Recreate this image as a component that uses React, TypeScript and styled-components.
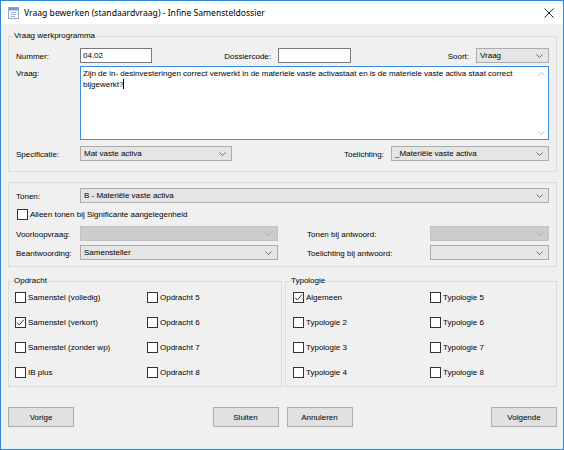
import styled, { createGlobalStyle } from 'styled-components';

const GlobalStyle = createGlobalStyle`
  html, body {
    margin: 0;
    padding: 0;
    background: #ffffff;
  }
  * {
    box-sizing: border-box;
  }
`;

const Window = styled.div`
  width: 564px;
  height: 450px;
  border: 1px solid #2b86d6;
  background: #f0f0f0;
  font-family: 'Liberation Sans', Arial, sans-serif;
  font-size: 8px;
  color: #000;
  display: flex;
  flex-direction: column;
`;

const TitleBar = styled.div`
  height: 23px;
  background: #ffffff;
  display: flex;
  align-items: center;
  padding: 0 9px 0 7px;
  flex-shrink: 0;
`;

const TitleText = styled.div`
  font-family: 'Noto Sans', 'Open Sans', sans-serif;
  font-size: 8.6px;
  margin-left: 5px;
  flex: 1;
  color: #000;
`;

const Content = styled.div`
  flex: 1;
  padding: 7px 6px 0 7px;
  display: flex;
  flex-direction: column;
`;

const Group = styled.fieldset<{ $mt?: number }>`
  margin: ${p => p.$mt ?? 0}px 0 0 0;
  padding: 0;
  border: 1px solid #dcdcdc;
  min-width: 0;
`;

const Legend = styled.legend`
  margin-left: 4px;
  padding: 0 1px;
  font-size: 8px;
  line-height: 10px;
  height: 10px;
`;

const GroupBody = styled.div<{ $pt: number; $pb: number }>`
  padding: ${p => p.$pt}px 7px ${p => p.$pb}px 7px;
  display: flex;
  flex-direction: column;
`;

const Row = styled.div<{ $mt?: number }>`
  display: flex;
  align-items: center;
  height: 15px;
  margin-top: ${p => p.$mt ?? 0}px;
`;

const Label = styled.div<{ $w?: number; $right?: boolean; $grow?: boolean }>`
  width: ${p => (p.$w ? `${p.$w}px` : 'auto')};
  flex: ${p => (p.$grow ? 1 : 'none')};
  text-align: ${p => (p.$right ? 'right' : 'left')};
  padding-right: ${p => (p.$right ? 7 : 0)}px;
  white-space: nowrap;
  padding-top: 2px;
`;

const TextInput = styled.div<{ $w: number }>`
  width: ${p => p.$w}px;
  height: 15px;
  background: #fff;
  border: 1px solid #7a7a7a;
  padding: 1px 2px;
  line-height: 12px;
`;

const SelectBox = styled.div<{ $w?: number; $disabled?: boolean }>`
  width: ${p => (p.$w ? `${p.$w}px` : 'auto')};
  flex: ${p => (p.$w ? 'none' : 1)};
  height: 15px;
  background: ${p => (p.$disabled ? '#cccccc' : '#e5e5e5')};
  border: 1px solid ${p => (p.$disabled ? '#c4c4c4' : '#acacac')};
  display: flex;
  align-items: center;
  padding: 0 5px 0 3px;
`;

const SelectText = styled.div`
  flex: 1;
  white-space: nowrap;
  overflow: hidden;
`;

const Chevron = ({ color = '#606060' }: { color?: string }) => (
  <svg width="7" height="4" viewBox="0 0 7 4">
    <polyline points="0.5,0.5 3.5,3.5 6.5,0.5" fill="none" stroke={color} strokeWidth="0.9" />
  </svg>
);

const Select = ({ w, text, disabled }: { w?: number; text?: string; disabled?: boolean }) => (
  <SelectBox $w={w} $disabled={disabled}>
    <SelectText>{text}</SelectText>
    <Chevron color={disabled ? '#a8a8a8' : '#606060'} />
  </SelectBox>
);

const QuestionRow = styled.div`
  display: flex;
  margin-top: 3px;
  height: 74px;
`;

const QuestionLabel = styled.div`
  width: 64px;
  padding-top: 3px;
`;

const QuestionBox = styled.div`
  flex: 1;
  display: flex;
  background: #fff;
  border: 1px solid #3c8fe0;
`;

const QuestionText = styled.div`
  flex: 1;
  padding: 2px 2px;
  line-height: 10px;
`;

const Caret = styled.span`
  display: inline-block;
  width: 1px;
  height: 10px;
  background: #000;
  vertical-align: -2px;
`;

const ScrollBar = styled.div`
  width: 13px;
  display: flex;
  flex-direction: column;
  justify-content: space-between;
  align-items: center;
  padding: 5px 0 4px;
`;

const ScrollArrow = ({ up }: { up?: boolean }) => (
  <svg width="7" height="4" viewBox="0 0 7 4">
    <polyline
      points={up ? '0.5,3.5 3.5,0.5 6.5,3.5' : '0.5,0.5 3.5,3.5 6.5,0.5'}
      fill="none"
      stroke="#b4b4b4"
      strokeWidth="0.9"
    />
  </svg>
);

const Spacer = styled.div<{ $w: number }>`
  width: ${p => p.$w}px;
  flex: none;
`;

const CheckRow = styled.div<{ $ml?: number }>`
  display: flex;
  align-items: center;
  height: 15px;
  margin-left: ${p => p.$ml ?? 0}px;
  white-space: nowrap;
`;

const Box = styled.div`
  width: 11px;
  height: 11px;
  border: 1px solid #333;
  background: #fff;
  margin-right: 2px;
  display: flex;
  align-items: center;
  justify-content: center;
  flex: none;
`;

const CheckBox = ({ label, checked, ml }: { label: string; checked?: boolean; ml?: number }) => (
  <CheckRow $ml={ml}>
    <Box>
      {checked && (
        <svg width="9" height="9" viewBox="0 0 9 9">
          <polyline points="1,4.5 3.3,7 8,1.5" fill="none" stroke="#222" strokeWidth="0.9" />
        </svg>
      )}
    </Box>
    {label}
  </CheckRow>
);

const BottomGroups = styled.div`
  display: flex;
  gap: 3px;
  margin-top: 9px;
`;

const CheckGroup = styled(Group)<{ $w: number }>`
  width: ${p => p.$w}px;
  flex: none;
`;

const CheckGrid = styled.div<{ $col: number; $pl: number }>`
  display: grid;
  grid-template-columns: ${p => p.$col}px 1fr;
  row-gap: 10px;
  padding: 4px 0 6px ${p => p.$pl}px;
`;

const ButtonBar = styled.div`
  display: flex;
  justify-content: space-between;
  margin-top: 20px;
`;

const ButtonPair = styled.div`
  display: flex;
  gap: 8px;
`;

const Button = styled.div`
  width: 66px;
  height: 20px;
  background: #e1e1e1;
  border: 1px solid #adadad;
  display: flex;
  align-items: center;
  justify-content: center;
`;

const DocIcon = () => (
  <svg width="11" height="12" viewBox="0 0 11 12">
    <rect x="0.5" y="0.5" width="10" height="11" fill="#fff" stroke="#8aa6c8" />
    <rect x="1" y="1" width="9" height="2.5" fill="#6f9bd1" />
    <line x1="2.5" y1="5.5" x2="8.5" y2="5.5" stroke="#a0b4cc" />
    <line x1="2.5" y1="7.5" x2="8.5" y2="7.5" stroke="#a0b4cc" />
    <line x1="2.5" y1="9.5" x2="7" y2="9.5" stroke="#a0b4cc" />
  </svg>
);

const CloseIcon = () => (
  <svg width="10" height="10" viewBox="0 0 10 10">
    <line x1="0.5" y1="0.5" x2="9.5" y2="9.5" stroke="#111" strokeWidth="0.9" />
    <line x1="9.5" y1="0.5" x2="0.5" y2="9.5" stroke="#111" strokeWidth="0.9" />
  </svg>
);

const opdracht = [
  ['Samenstel (volledig)', false],
  ['Opdracht 5', false],
  ['Samenstel (verkort)', true],
  ['Opdracht 6', false],
  ['Samenstel (zonder wp)', false],
  ['Opdracht 7', false],
  ['IB plus', false],
  ['Opdracht 8', false],
] as const;

const typologie = [
  ['Algemeen', true],
  ['Typologie 5', false],
  ['Typologie 2', false],
  ['Typologie 6', false],
  ['Typologie 3', false],
  ['Typologie 7', false],
  ['Typologie 4', false],
  ['Typologie 8', false],
] as const;

export default function App() {
  return (
    <>
      <GlobalStyle />
      <Window>
        <TitleBar>
          <DocIcon />
          <TitleText>Vraag bewerken (standaardvraag) - Infine Samensteldossier</TitleText>
          <CloseIcon />
        </TitleBar>
        <Content>
          <Group>
            <Legend>Vraag werkprogramma</Legend>
            <GroupBody $pt={7} $pb={10}>
              <Row>
                <Label $w={64}>Nummer:</Label>
                <TextInput $w={72}>04.02</TextInput>
                <Label $w={126} $right>
                  Dossiercode:
                </Label>
                <TextInput $w={73} />
                <Label $grow $right>
                  Soort:
                </Label>
                <Select w={73} text="Vraag" />
              </Row>
              <QuestionRow>
                <QuestionLabel>Vraag:</QuestionLabel>
                <QuestionBox>
                  <QuestionText>
                    Zijn de in- desinvesteringen correct verwerkt in de materiele vaste activastaat en is de
                    materiele vaste activa staat correct bijgewerkt?
                    <Caret />
                  </QuestionText>
                  <ScrollBar>
                    <ScrollArrow up />
                    <ScrollArrow />
                  </ScrollBar>
                </QuestionBox>
              </QuestionRow>
              <Row $mt={6}>
                <Label $w={64}>Specificatie:</Label>
                <Select w={152} text="Mat vaste activa" />
                <Label $grow $right>
                  Toelichting:
                </Label>
                <Select w={158} text="_Materiële vaste activa" />
              </Row>
            </GroupBody>
          </Group>

          <Group $mt={10}>
            <GroupBody $pt={5} $pb={6}>
              <Row>
                <Label $w={64}>Tonen:</Label>
                <Select text="B - Materiële vaste activa" />
              </Row>
              <Row $mt={4}>
                <CheckBox ml={1} label="Alleen tonen bij Significante aangelegenheid" />
              </Row>
              <Row $mt={4}>
                <Label $w={64}>Voorloopvraag:</Label>
                <Select w={198} disabled />
                <Spacer $w={29} />
                <Label $w={123}>Tonen bij antwoord:</Label>
                <Select disabled />
              </Row>
              <Row $mt={4}>
                <Label $w={64}>Beantwoording:</Label>
                <Select w={198} text="Samensteller" />
                <Spacer $w={29} />
                <Label $w={123}>Toelichting bij antwoord:</Label>
                <Select />
              </Row>
            </GroupBody>
          </Group>

          <BottomGroups>
            <CheckGroup $w={274}>
              <Legend>Opdracht</Legend>
              <CheckGrid $col={132} $pl={6}>
                {opdracht.map(([label, checked]) => (
                  <CheckBox key={label} label={label} checked={checked} />
                ))}
              </CheckGrid>
            </CheckGroup>
            <CheckGroup $w={272}>
              <Legend>Typologie</Legend>
              <CheckGrid $col={137} $pl={7}>
                {typologie.map(([label, checked]) => (
                  <CheckBox key={label} label={label} checked={checked} />
                ))}
              </CheckGrid>
            </CheckGroup>
          </BottomGroups>

          <ButtonBar>
            <Button>Vorige</Button>
            <ButtonPair>
              <Button>Sluiten</Button>
              <Button>Annuleren</Button>
            </ButtonPair>
            <Button>Volgende</Button>
          </ButtonBar>
        </Content>
      </Window>
    </>
  );
}
